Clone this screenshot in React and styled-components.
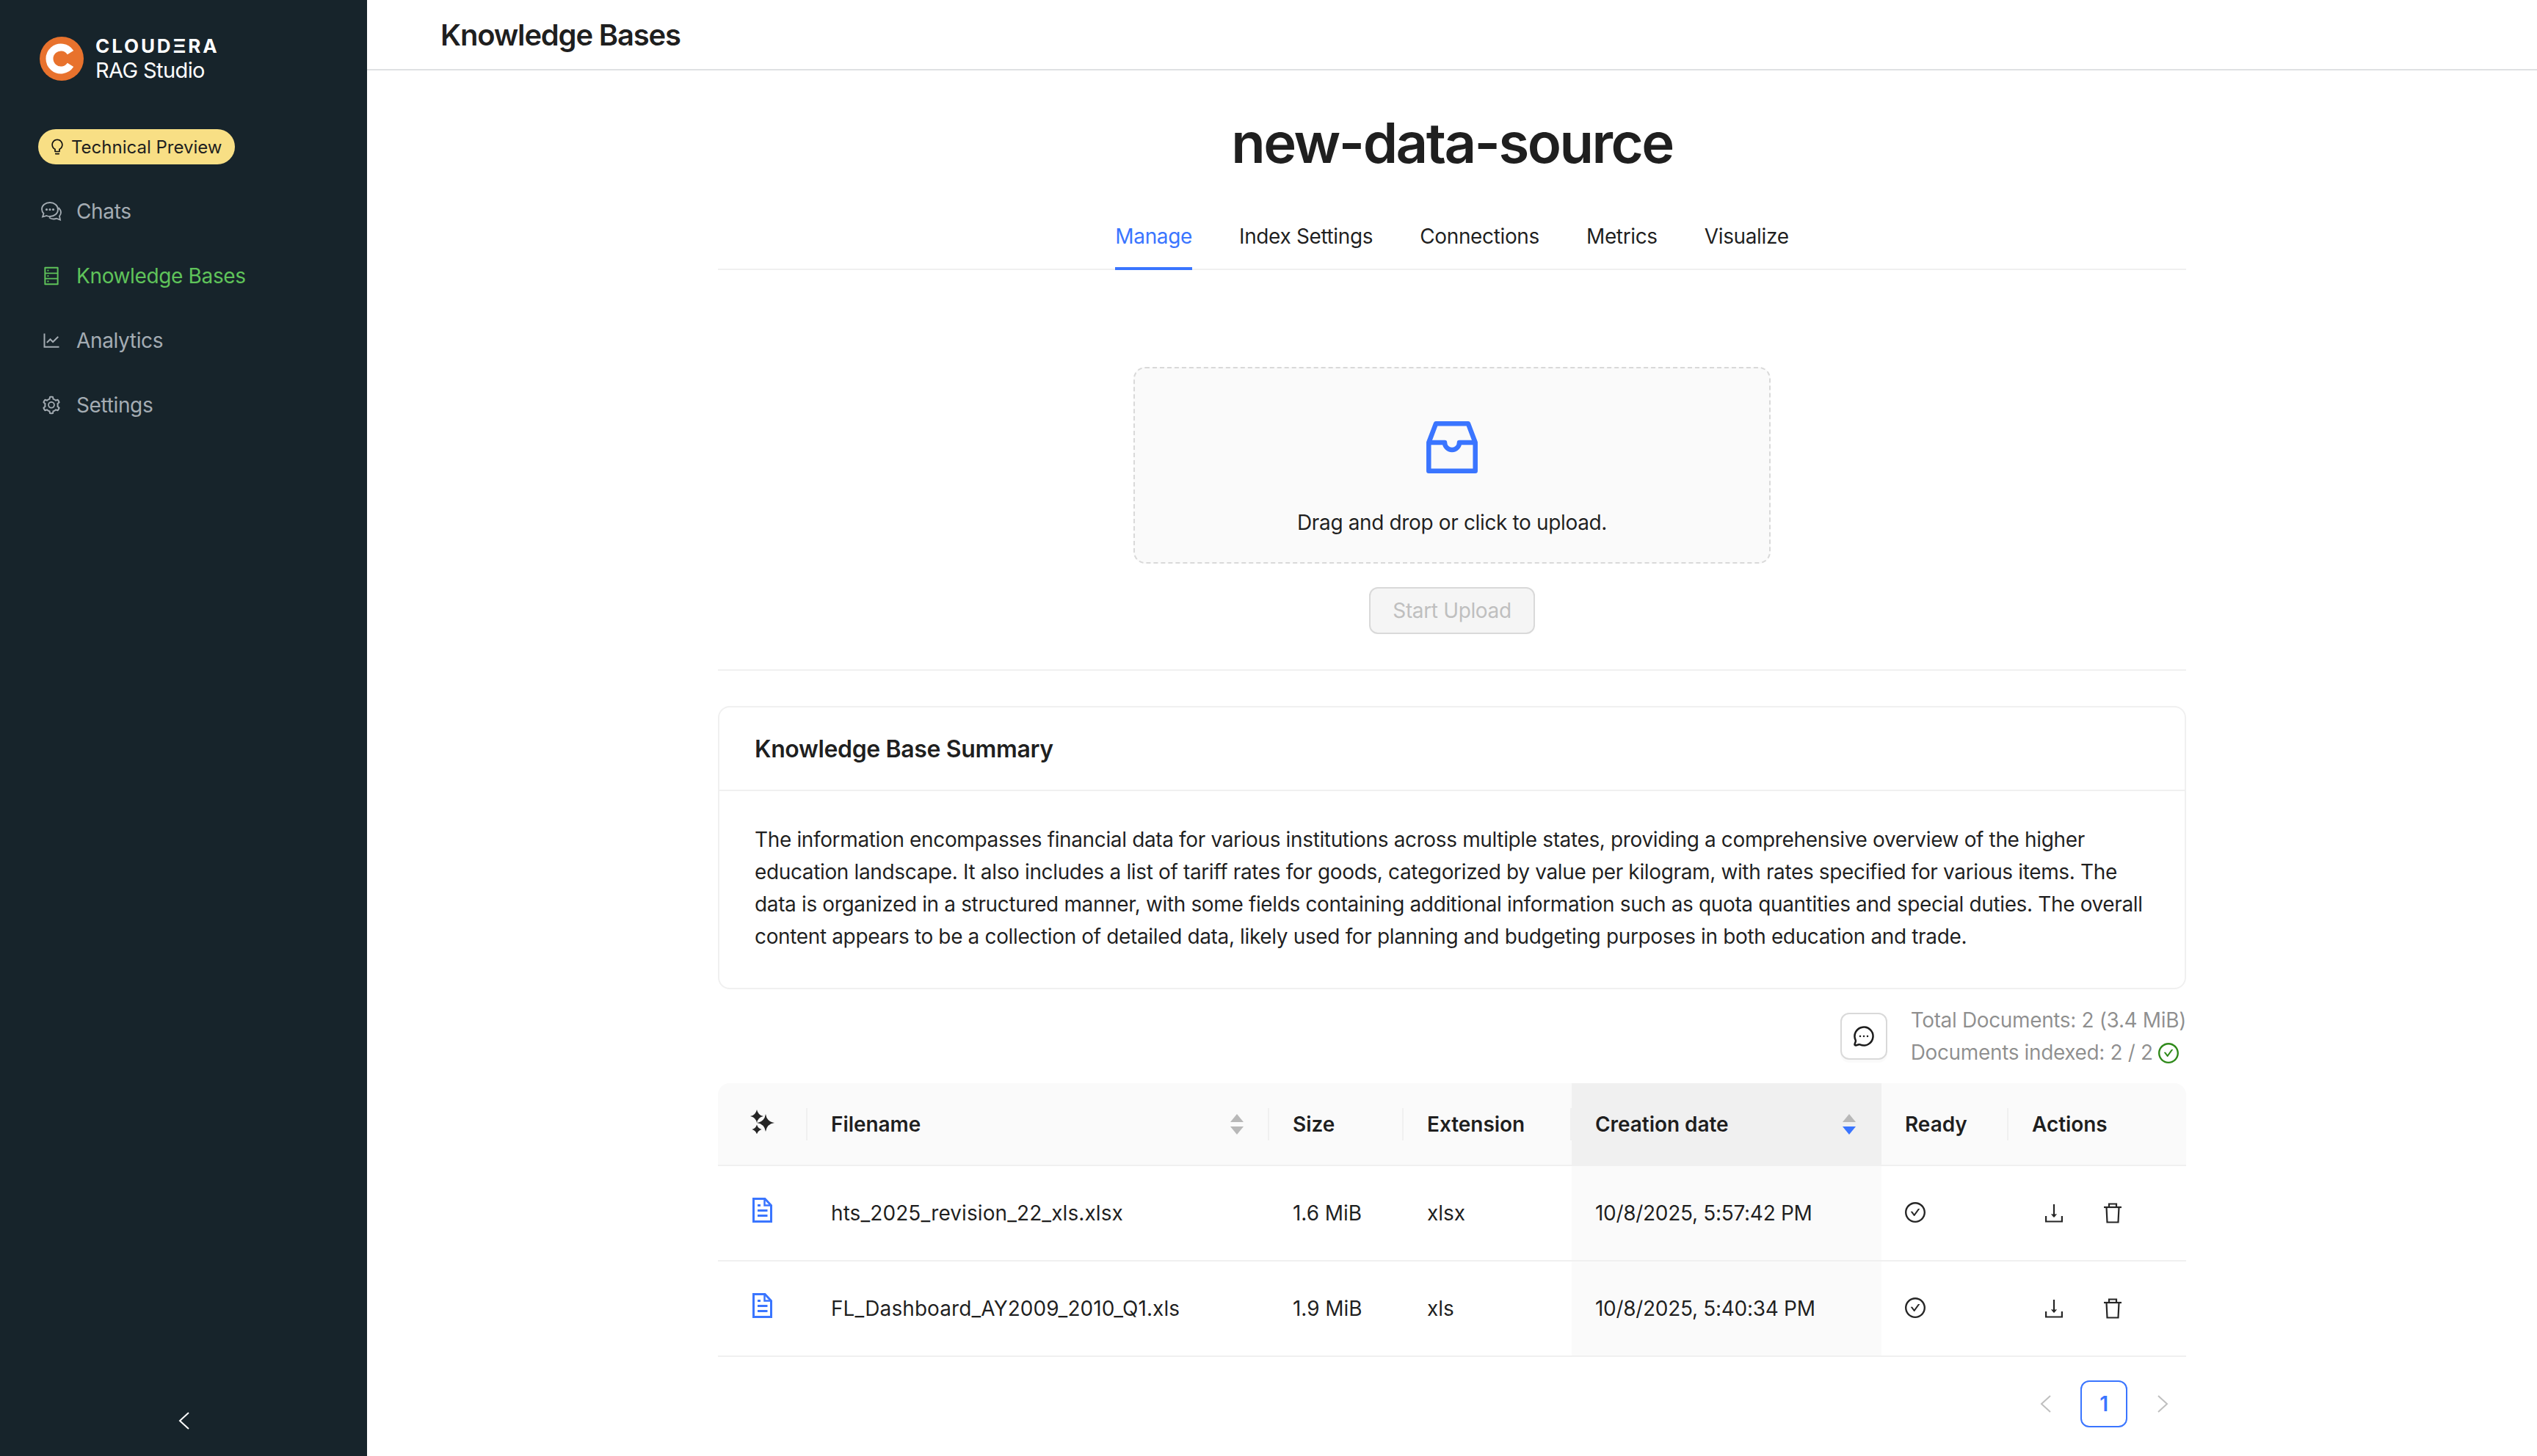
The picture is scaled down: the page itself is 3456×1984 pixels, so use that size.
import React from 'react';
import styled, { createGlobalStyle } from 'styled-components';
import {
  AiOutlineBulb,
  AiOutlineCheckCircle,
  AiOutlineDatabase,
  AiOutlineLineChart,
  AiOutlineSetting,
} from 'react-icons/ai';
import { MessageCircleMore } from 'lucide-react';

const BLUE = '#3a75ff';

const files = [
  { name: 'hts_2025_revision_22_xls.xlsx', size: '1.6 MiB', ext: 'xlsx', date: '10/8/2025, 5:57:42 PM' },
  { name: 'FL_Dashboard_AY2009_2010_Q1.xls', size: '1.9 MiB', ext: 'xls', date: '10/8/2025, 5:40:34 PM' },
];

const star = (cx, cy, r) =>
  `M${cx} ${cy - r}Q${cx + 1.5} ${cy - 1.5} ${cx + r} ${cy}Q${cx + 1.5} ${cy + 1.5} ${cx} ${cy + r}Q${cx - 1.5} ${cy + 1.5} ${cx - r} ${cy}Q${cx - 1.5} ${cy - 1.5} ${cx} ${cy - r}Z`;

const LogoMark = () => (
  <svg width="60" height="60" viewBox="0 0 60 60">
    <circle cx="30" cy="30" r="30" fill="#e8722d" />
    <path d="M42 21.600A15.500 15.500 0 1 0 42 38.400" fill="none" stroke="#fff" strokeWidth="10" />
  </svg>
);

const ChatsIcon = () => (
  <svg width="28" height="26" viewBox="0 0 28 26" fill="none" stroke="currentColor" strokeWidth="1.8">
    <path d="M12 1C6 1 1 4.800 1 10c0 2.600 1 4.500 2.500 6L2 20.500l5.500-1.500c1.400.6 3 1 4.500 1 6 0 11-4 11-9.500S18 1 12 1z" />
    <path d="M23.500 8c2 1.800 3.500 4 3.500 6.500 0 2-.8 3.600-2 5l1 5-5-1.800c-1.200.5-2.500.8-4 .8-2.200 0-4.300-.8-6-2" />
    <circle cx="7.500" cy="10.500" r=".7" fill="currentColor" />
    <circle cx="12" cy="10.500" r=".7" fill="currentColor" />
    <circle cx="16.500" cy="10.500" r=".7" fill="currentColor" />
  </svg>
);

const InboxIcon = () => (
  <svg width="70" height="71" viewBox="0 0 70 71" fill="none" stroke={BLUE} strokeWidth="6.500" strokeLinejoin="round">
    <path d="M3.300 29 13 3.300H57L66.700 29V67.700H3.300Z" />
    <path d="M3.300 29H25A10 10 0 0 0 45 29H66.700" />
  </svg>
);

const SparklesIcon = () => (
  <svg width="33" height="33" viewBox="0 0 33 33" fill="#262626">
    <path d={star(9, 9, 9)} />
    <path d={star(21, 18, 12)} />
    <path d={star(9, 27, 6.500)} />
  </svg>
);

const FileIcon = () => (
  <svg width="27" height="34" viewBox="0 0 27 34" fill="none" stroke={BLUE} strokeWidth="3">
    <path d="M1.500 1.500H17L25.500 10.500V32.500H1.500Z" />
    <path d="M16.500 1.500V10.500H25.500" strokeWidth="2.500" />
    <path d="M7 10.500H11M7 17.500H20.500M7 24.500H20.500" />
  </svg>
);

const DownloadIcon = () => (
  <svg width="24" height="26" viewBox="0 0 24 26" fill="none" stroke="#262626" strokeWidth="2.200">
    <path d="M12 1V18" />
    <path d="M8.500 14.500 12 18.500 15.500 14.500" fill="#262626" strokeWidth="1" />
    <path d="M1.100 17V24.500H22.900V17" />
  </svg>
);

const TrashIcon = () => (
  <svg width="24" height="28" viewBox="0 0 24 28" fill="none" stroke="#262626" strokeWidth="2.200">
    <path d="M0 6H24" />
    <path d="M7 6V1.500H17V6" />
    <path d="M3.500 6 4.500 26.500H19.500L20.500 6" />
  </svg>
);

const ChevronIcon = ({ dir = 'left', size = 24, color = 'currentColor' }) => (
  <svg width={size * 0.625} height={size} viewBox="0 0 15 24" fill="none" stroke={color} strokeWidth="2">
    <path d={dir === 'left' ? 'M14 1 2 12 14 23' : 'M1 1 13 12 1 23'} />
  </svg>
);

const SortCarets = ({ active }) => (
  <Carets>
    <svg width="18" height="11" viewBox="0 0 18 11"><path d="M9 0 18 11H0Z" fill="#b8b8b8" /></svg>
    <svg width="18" height="11" viewBox="0 0 18 11"><path d="M0 0H18L9 11Z" fill={active ? BLUE : '#b8b8b8'} /></svg>
  </Carets>
);

export default function App() {
  return (
    <>
      <GlobalStyle />
      <Page>
        <Sidebar>
          <Brand>
            <LogoMark />
            <BrandText>
              <BrandName>CLOUDΞRA</BrandName>
              <BrandProduct>RAG Studio</BrandProduct>
            </BrandText>
          </Brand>
          <PreviewBadge>
            <AiOutlineBulb size={24} color="#111" />
            Technical Preview
          </PreviewBadge>
          <Nav>
            <NavItem><NavIcon><ChatsIcon /></NavIcon>Chats</NavItem>
            <NavItem $active><NavIcon><AiOutlineDatabase size={32} /></NavIcon>Knowledge Bases</NavItem>
            <NavItem><NavIcon><AiOutlineLineChart size={32} /></NavIcon>Analytics</NavItem>
            <NavItem><NavIcon><AiOutlineSetting size={32} /></NavIcon>Settings</NavItem>
          </Nav>
          <CollapseTrigger><ChevronIcon dir="left" size={24} /></CollapseTrigger>
        </Sidebar>
        <Main>
          <Header>Knowledge Bases</Header>
          <Content>
            <Title>new-data-source</Title>
            <Tabs>
              <Tab $active>Manage</Tab>
              <Tab>Index Settings</Tab>
              <Tab>Connections</Tab>
              <Tab>Metrics</Tab>
              <Tab>Visualize</Tab>
            </Tabs>
            <Dragger>
              <InboxIcon />
              <DragText>Drag and drop or click to upload.</DragText>
            </Dragger>
            <UploadButton disabled>Start Upload</UploadButton>
            <Divider />
            <SummaryCard>
              <CardHead>Knowledge Base Summary</CardHead>
              <CardBody>
                The information encompasses financial data for various institutions across multiple states, providing a comprehensive overview of the higher education landscape. It also includes a list of tariff rates for goods, categorized by value per kilogram, with rates specified for various items. The data is organized in a structured manner, with some fields containing additional information such as quota quantities and special duties. The overall content appears to be a collection of detailed data, likely used for planning and budgeting purposes in both education and trade.
              </CardBody>
            </SummaryCard>
            <StatsRow>
              <IconButton><MessageCircleMore size={30} strokeWidth={2} color="#1c1c1c" /></IconButton>
              <Stats>
                <div>Total Documents: 2 (3.4 MiB)</div>
                <div>
                  Documents indexed: 2 / 2
                  <DoneIcon><AiOutlineCheckCircle size={32} color="#2f8a1a" /></DoneIcon>
                </div>
              </Stats>
            </StatsRow>
            <Table>
              <thead>
                <tr>
                  <Th $width={122} $divider><SparkleCell><SparklesIcon /></SparkleCell></Th>
                  <Th $width={629} $divider><ThInner>Filename<SortCarets /></ThInner></Th>
                  <Th $width={183} $divider>Size</Th>
                  <Th $width={229} $divider>Extension</Th>
                  <Th $width={422} $sorted><ThInner>Creation date<SortCarets active /></ThInner></Th>
                  <Th $width={173} $divider>Ready</Th>
                  <Th $width={242}>Actions</Th>
                </tr>
              </thead>
              <tbody>
                {files.map((file) => (
                  <tr key={file.name}>
                    <Td><FileCell><FileIcon /></FileCell></Td>
                    <NameTd>{file.name}</NameTd>
                    <Td>{file.size}</Td>
                    <Td>{file.ext}</Td>
                    <DateTd>{file.date}</DateTd>
                    <Td><ReadyCell><AiOutlineCheckCircle size={32} color="#262626" /></ReadyCell></Td>
                    <Td>
                      <Actions>
                        <DownloadIcon />
                        <TrashIcon />
                      </Actions>
                    </Td>
                  </tr>
                ))}
              </tbody>
            </Table>
            <Pagination>
              <PageArrow><ChevronIcon dir="left" size={24} color="#bfbfbf" /></PageArrow>
              <PageNumber>1</PageNumber>
              <PageArrow><ChevronIcon dir="right" size={24} color="#bfbfbf" /></PageArrow>
            </Pagination>
          </Content>
        </Main>
      </Page>
    </>
  );
}

const GlobalStyle = createGlobalStyle`
  html, body {
    margin: 0;
    padding: 0;
    background: #fff;
  }
  body {
    font-family: Inter, "Liberation Sans", sans-serif;
    font-size: 28px;
    letter-spacing: -0.36px;
    color: rgba(0, 0, 0, 0.88);
  }
`;

const Page = styled.div`
  display: flex;
  width: 3456px;
  height: 1984px;
  overflow: hidden;
`;

const Sidebar = styled.aside`
  display: flex;
  flex-direction: column;
  flex: 0 0 500px;
  background: #17242b;
`;

const Brand = styled.div`
  display: flex;
  align-items: center;
  gap: 16px;
  padding: 50px 0 0 54px;
  height: 60px;
  box-sizing: content-box;
`;

const BrandText = styled.div`
  display: flex;
  flex-direction: column;
  color: #fff;
`;

const BrandName = styled.span`
  font-size: 26px;
  line-height: 32px;
  font-weight: 700;
  letter-spacing: 2.9px;
`;

const BrandProduct = styled.span`
  font-size: 29px;
  line-height: 34px;
  letter-spacing: -0.6px;
`;

const PreviewBadge = styled.div`
  display: inline-flex;
  align-items: center;
  align-self: flex-start;
  gap: 7px;
  height: 48px;
  margin: 66px 0 0 52px;
  padding: 0 18px 0 14px;
  border-radius: 24px;
  background: #f8df85;
  color: #1f1f1f;
  font-size: 24px;
  letter-spacing: 0;
`;

const Nav = styled.nav`
  display: flex;
  flex-direction: column;
  margin-top: 20px;
`;

const NavItem = styled.div`
  display: flex;
  align-items: center;
  gap: 20px;
  height: 88px;
  padding-left: 56px;
  color: ${(p) => (p.$active ? '#5fc35a' : '#a4acb3')};
`;

const NavIcon = styled.span`
  display: flex;
  justify-content: center;
  width: 28px;
`;

const CollapseTrigger = styled.div`
  display: flex;
  align-items: center;
  justify-content: center;
  height: 96px;
  margin-top: auto;
  color: #fff;
`;

const Main = styled.main`
  flex: 1;
  display: flex;
  flex-direction: column;
  min-width: 0;
`;

const Header = styled.header`
  display: flex;
  align-items: center;
  height: 94px;
  padding-left: 100px;
  border-bottom: 2px solid #dfe1e3;
  font-size: 40px;
  font-weight: 600;
  letter-spacing: -1.2px;
`;

const Content = styled.div`
  display: flex;
  flex-direction: column;
  width: 2000px;
  margin: 0 auto;
`;

const Title = styled.h1`
  margin: 52px 0 0;
  font-size: 76px;
  line-height: 92px;
  font-weight: 600;
  letter-spacing: -2.500px;
  text-align: center;
`;

const Tabs = styled.div`
  display: flex;
  justify-content: center;
  gap: 64px;
  margin-top: 36px;
  border-bottom: 2px solid #f0f0f0;
`;

const Tab = styled.div`
  margin-bottom: -2px;
  padding: 24px 0 20px;
  line-height: 44px;
  color: ${(p) => (p.$active ? BLUE : 'rgba(0, 0, 0, 0.88)')};
  border-bottom: 4px solid ${(p) => (p.$active ? BLUE : 'transparent')};
`;

const Dragger = styled.div`
  display: flex;
  flex-direction: column;
  align-items: center;
  box-sizing: border-box;
  width: 868px;
  height: 268px;
  margin: 132px auto 0;
  padding-top: 72px;
  border: 2px dashed #d9d9d9;
  border-radius: 16px;
  background: #fafafa;
`;

const DragText = styled.div`
  margin-top: 45px;
  line-height: 44px;
`;

const UploadButton = styled.button`
  align-self: center;
  width: 226px;
  height: 64px;
  margin-top: 32px;
  border: 2px solid #d9d9d9;
  border-radius: 12px;
  background: #f5f5f5;
  color: #bfbfbf;
  font: inherit;
  letter-spacing: inherit;
`;

const Divider = styled.div`
  height: 2px;
  margin-top: 48px;
  background: #f0f0f0;
`;

const SummaryCard = styled.section`
  margin-top: 48px;
  border: 2px solid #f0f0f0;
  border-radius: 16px;
`;

const CardHead = styled.div`
  display: flex;
  align-items: center;
  height: 112px;
  padding: 0 48px;
  border-bottom: 2px solid #f0f0f0;
  font-size: 32px;
  font-weight: 600;
`;

const CardBody = styled.div`
  padding: 44px 48px 48px;
  line-height: 44px;
`;

const StatsRow = styled.div`
  display: flex;
  align-items: center;
  justify-content: flex-end;
  gap: 32px;
  margin-top: 20px;
`;

const IconButton = styled.div`
  display: flex;
  align-items: center;
  justify-content: center;
  box-sizing: border-box;
  width: 64px;
  height: 64px;
  border: 2px solid #d9d9d9;
  border-radius: 12px;
  box-shadow: 0 4px 0 rgba(0, 0, 0, 0.02);
`;

const Stats = styled.div`
  line-height: 44px;
  color: rgba(0, 0, 0, 0.45);
`;

const DoneIcon = styled.span`
  display: inline-block;
  margin-left: 5px;
  vertical-align: -7px;
  height: 32px;
`;

const Table = styled.table`
  width: 2000px;
  margin-top: 20px;
  border-collapse: separate;
  border-spacing: 0;
  table-layout: fixed;
  letter-spacing: -0.05px;
`;

const Th = styled.th`
  position: relative;
  box-sizing: border-box;
  width: ${(p) => p.$width}px;
  height: 113px;
  padding: 0 32px;
  border-bottom: 2px solid #f0f0f0;
  background: ${(p) => (p.$sorted ? '#f0f0f0' : '#fafafa')};
  font-weight: 600;
  text-align: left;

  &:first-child { border-top-left-radius: 16px; }
  &:last-child { border-top-right-radius: 16px; }

  &::before {
    content: ${(p) => (p.$divider ? '""' : 'none')};
    position: absolute;
    top: 50%;
    right: 0;
    width: 2px;
    height: 44px;
    transform: translateY(-50%);
    background: #f0f0f0;
  }
`;

const ThInner = styled.div`
  display: flex;
  align-items: center;
  justify-content: space-between;
`;

const SparkleCell = styled.span`
  display: flex;
  margin: -7px 0 0 12px;
`;

const Carets = styled.span`
  display: flex;
  flex-direction: column;
  gap: 6px;
  margin-right: 3px;
`;

const Td = styled.td`
  height: 130px;
  box-sizing: border-box;
  padding: 0 32px;
  border-bottom: 2px solid #f0f0f0;
  background: #fff;
`;

const NameTd = styled(Td)`
  letter-spacing: 0.08px;
`;

const DateTd = styled(Td)`
  background: #fafafa;
  letter-spacing: -0.3px;
`;

const FileCell = styled.span`
  display: flex;
  margin: -9px 0 0 15px;
`;

const ReadyCell = styled.span`
  display: flex;
  margin-top: -2px;
  margin-left: -2px;
`;

const Actions = styled.span`
  display: flex;
  align-items: center;
  gap: 56px;
  margin-left: 18px;
`;

const Pagination = styled.div`
  display: flex;
  justify-content: flex-end;
  gap: 16px;
  margin-top: 32px;
`;

const PageArrow = styled.div`
  display: flex;
  align-items: center;
  justify-content: center;
  width: 64px;
  height: 64px;
`;

const PageNumber = styled(PageArrow)`
  box-sizing: border-box;
  border: 2px solid ${BLUE};
  border-radius: 12px;
  color: ${BLUE};
  font-weight: 600;
`;
